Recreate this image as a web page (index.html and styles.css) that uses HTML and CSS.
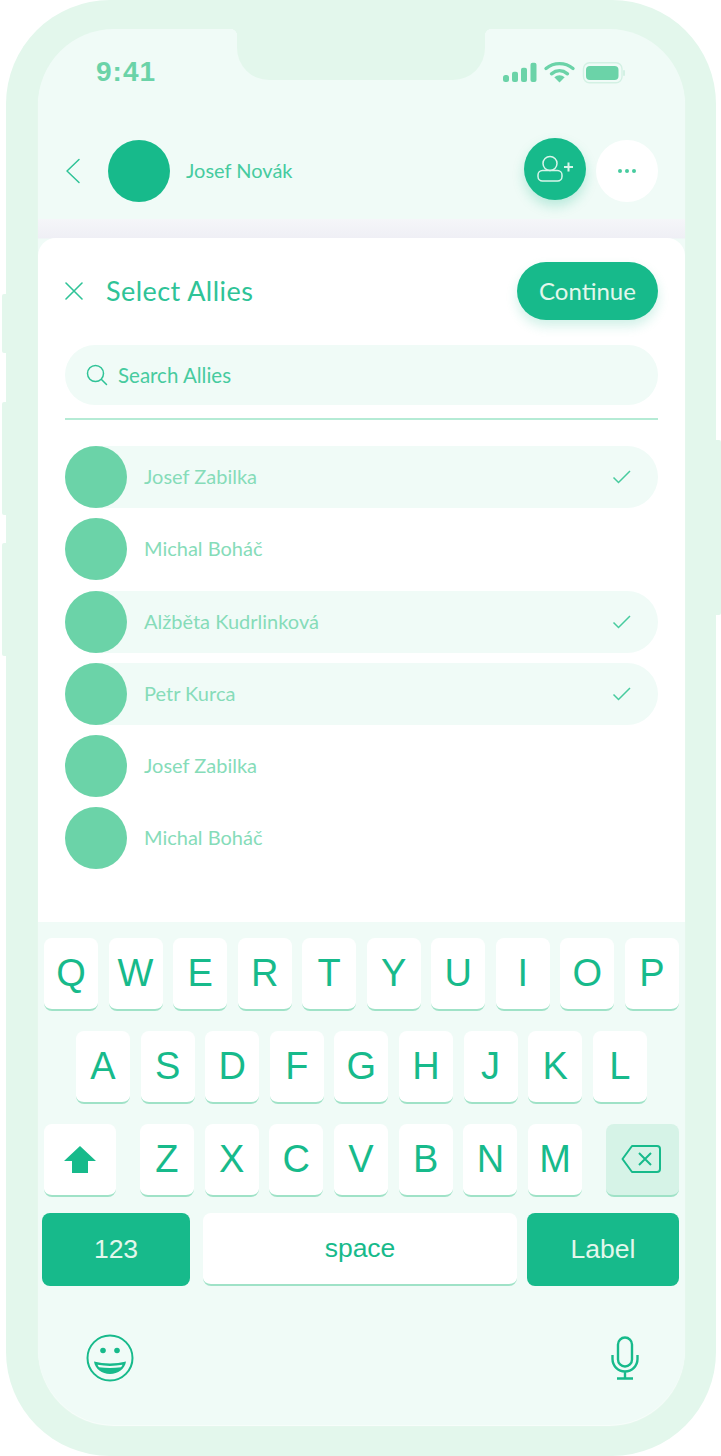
FILE: index.html
```html
<!DOCTYPE html>
<html lang="en">
<head>
  <meta charset="UTF-8">
  <title>Select Allies</title>
  <link rel="stylesheet" href="styles.css">
</head>
<body>

  <div class="phone">
    <span class="side-btn side-mute"></span>
    <span class="side-btn side-up"></span>
    <span class="side-btn side-down"></span>
    <span class="side-btn side-power"></span>

    <div class="screen">
      <div class="notch"></div>

      <div class="status-bar">
        <span class="time">9:41</span>
        <svg class="status-icons" width="122" height="24" viewBox="0 0 122 24">
          <g fill="#6bd3a8">
            <rect x="0" y="15" width="6" height="7" rx="2.500"/>
            <rect x="9" y="11.700" width="6" height="10.300" rx="2"/>
            <rect x="18" y="7.700" width="6" height="14.300" rx="2"/>
            <rect x="27.500" y="2.700" width="6" height="19.300" rx="2"/>
            <path d="M56.500 22.500l-5.200-5.200a7.400 7.400 0 0 1 10.400 0z"/>
            <rect x="83" y="6" width="32.500" height="14" rx="4"/>
          </g>
          <g fill="none" stroke="#6bd3a8" stroke-width="3.400" stroke-linecap="round">
            <path d="M43 8.500c8-6.500 19-6.500 27 0"/>
            <path d="M48.500 13.800c5-4 11-4 16 0"/>
          </g>
          <rect x="80.500" y="2.700" width="38.500" height="20" rx="6" fill="none" stroke="#d3f1e4" stroke-width="1.400"/>
          <rect x="120" y="10" width="2" height="6" rx="1" fill="#d3f1e4"/>
        </svg>
      </div>

      <header class="chat-head">
        <svg class="back-icon" width="16" height="26" viewBox="0 0 16 26">
          <path d="M14 1.500L2 13l12 11.500" fill="none" stroke="#2fc397" stroke-width="1.500" stroke-linecap="round" stroke-linejoin="round"/>
        </svg>
        <span class="avatar avatar-dark"></span>
        <span class="head-name">Josef Novák</span>
        <button class="round-btn add-btn" type="button">
          <svg width="38" height="28" viewBox="0 0 38 28">
            <g fill="none" stroke="#d9f5ea" stroke-width="1.500">
              <circle cx="14" cy="8.500" r="7"/>
              <rect x="2" y="15.500" width="24" height="10.500" rx="4.500"/>
            </g>
            <path d="M28 12h9M32.500 7.500v9" stroke="#d9f5ea" stroke-width="2" fill="none"/>
          </svg>
        </button>
        <button class="round-btn more-btn" type="button">
          <span class="dot"></span><span class="dot"></span><span class="dot"></span>
        </button>
      </header>

      <div class="sheet-wrap">
        <section class="sheet">
          <div class="sheet-top">
            <svg class="close-icon" width="18" height="18" viewBox="0 0 18 18">
              <path d="M1 1l16 16M17 1L1 17" stroke="#2fc397" stroke-width="1.600" stroke-linecap="round" fill="none"/>
            </svg>
            <h2 class="sheet-title">Select Allies</h2>
            <button class="continue-btn" type="button">Continue</button>
          </div>

          <div class="search">
            <svg width="22" height="22" viewBox="0 0 22 22">
              <circle cx="9.500" cy="9.500" r="8" fill="none" stroke="#2fc397" stroke-width="1.500"/>
              <path d="M15.500 15.500l5 5" stroke="#2fc397" stroke-width="1.500" stroke-linecap="round"/>
            </svg>
            <span>Search Allies</span>
          </div>

          <ul class="allies">
            <li class="ally selected">
              <span class="avatar"></span><span class="ally-name">Josef Zabilka</span>
              <svg class="check" width="20" height="16" viewBox="0 0 20 16"><path d="M1.500 8.500l5 5L18 2" fill="none" stroke="#47cb9f" stroke-width="1.500"/></svg>
            </li>
            <li class="ally">
              <span class="avatar"></span><span class="ally-name">Michal Boháč</span>
            </li>
            <li class="ally selected">
              <span class="avatar"></span><span class="ally-name">Alžběta Kudrlinková</span>
              <svg class="check" width="20" height="16" viewBox="0 0 20 16"><path d="M1.500 8.500l5 5L18 2" fill="none" stroke="#47cb9f" stroke-width="1.500"/></svg>
            </li>
            <li class="ally selected">
              <span class="avatar"></span><span class="ally-name">Petr Kurca</span>
              <svg class="check" width="20" height="16" viewBox="0 0 20 16"><path d="M1.500 8.500l5 5L18 2" fill="none" stroke="#47cb9f" stroke-width="1.500"/></svg>
            </li>
            <li class="ally">
              <span class="avatar"></span><span class="ally-name">Josef Zabilka</span>
            </li>
            <li class="ally">
              <span class="avatar"></span><span class="ally-name">Michal Boháč</span>
            </li>
          </ul>
        </section>
      </div>

      <div class="keyboard">
        <div class="key-row">
          <span class="key">Q</span><span class="key">W</span><span class="key">E</span><span class="key">R</span><span class="key">T</span><span class="key">Y</span><span class="key">U</span><span class="key">I</span><span class="key">O</span><span class="key">P</span>
        </div>
        <div class="key-row row-two">
          <span class="key">A</span><span class="key">S</span><span class="key">D</span><span class="key">F</span><span class="key">G</span><span class="key">H</span><span class="key">J</span><span class="key">K</span><span class="key">L</span>
        </div>
        <div class="key-row">
          <span class="key key-shift">
            <svg width="32" height="28" viewBox="0 0 32 28"><path d="M16 1L32 16H24V28H8V16H0z" fill="#17ba8b"/></svg>
          </span>
          <span class="letters">
            <span class="key">Z</span><span class="key">X</span><span class="key">C</span><span class="key">V</span><span class="key">B</span><span class="key">N</span><span class="key">M</span>
          </span>
          <span class="key key-delete">
            <svg width="40" height="30" viewBox="0 0 40 30">
              <path d="M11 2h25a3 3 0 0 1 3 3v20a3 3 0 0 1-3 3H11L1.500 15z" fill="none" stroke="#17ba8b" stroke-width="2" stroke-linejoin="round"/>
              <path d="M18 9l12 12M30 9L18 21" stroke="#17ba8b" stroke-width="2" fill="none"/>
            </svg>
          </span>
        </div>
        <div class="key-row row-bottom">
          <span class="key key-action key-num">123</span>
          <span class="key key-space">space</span>
          <span class="key key-action key-label">Label</span>
        </div>
      </div>

      <div class="kb-tools">
        <svg width="48" height="48" viewBox="0 0 48 48">
          <circle cx="24" cy="24" r="22.500" fill="none" stroke="#17ba8b" stroke-width="2"/>
          <circle cx="17" cy="16.500" r="2.800" fill="#17ba8b"/>
          <circle cx="31" cy="16.500" r="2.800" fill="#17ba8b"/>
          <path d="M8 27.500c10 2.500 22 2.500 32 0c-1 7.500-8 12.500-16 12.500S9 35 8 27.500z" fill="#17ba8b"/>
          <path d="M11.500 30.800c8 1.500 17 1.500 25 0c-.5 1-1 2-1.500 2.500c-7 1-15 1-22 0c-.5-.5-1-1.500-1.500-2.500z" fill="#f0fbf7"/>
        </svg>
        <svg width="28" height="44" viewBox="0 0 28 44">
          <rect x="7" y="1.500" width="14" height="29" rx="7" fill="none" stroke="#17ba8b" stroke-width="2.400"/>
          <path d="M1.500 19v4a12.500 12.500 0 0 0 25 0v-4M14 35.500V42M6 42.500h16" fill="none" stroke="#17ba8b" stroke-width="2.400"/>
        </svg>
      </div>
    </div>
  </div>

</body>
</html>
```

FILE: styles.css
```css
* {
  box-sizing: border-box;
}

body {
  margin: 0;
  width: 721px;
  height: 1456px;
  background-color: white;
  overflow: hidden;
  font-family: "Lato", sans-serif;
}

.phone {
  position: relative;
  margin-left: 6px;
  width: 710px;
  height: 1456px;
  padding: 29px 31px 31px 32px;
  background-color: #e3f7ec;
  border-radius: 104px;
}

.side-btn {
  position: absolute;
  width: 6px;
  background-color: #e3f7ec;
  border-radius: 2px 0 0 2px;
}

.side-mute { left: -4px; top: 294px; height: 59px; }
.side-up { left: -4px; top: 402px; height: 113px; }
.side-down { left: -4px; top: 543px; height: 113px; }

.side-power {
  left: 709px;
  top: 440px;
  height: 175px;
  border-radius: 0 2px 2px 0;
}

.screen {
  position: relative;
  height: 1396px;
  background-color: #f0fbf7;
  border-radius: 76px;
  box-shadow: 0 1px 1px rgba(255, 255, 255, 0.8);
  overflow: hidden;
}

.notch {
  position: absolute;
  top: -1px;
  left: 199px;
  width: 248px;
  height: 52px;
  background-color: #e3f7ec;
  border-radius: 0 0 32px 32px;
}

/* small outward corners where the notch meets the top edge */
.notch::before,
.notch::after {
  content: "";
  position: absolute;
  top: 1px;
  width: 7px;
  height: 7px;
}

.notch::before {
  left: -7px;
  background: radial-gradient(circle at 0 100%, transparent 7px, #e3f7ec 7.500px);
}

.notch::after {
  right: -7px;
  background: radial-gradient(circle at 100% 100%, transparent 7px, #e3f7ec 7.500px);
}

.status-bar {
  display: flex;
  justify-content: space-between;
  align-items: center;
  height: 90px;
  padding: 0 60px 4px 58px;
}

.time {
  font-family: "Liberation Sans", sans-serif;
  font-size: 28px;
  font-weight: bold;
  letter-spacing: 1px;
  color: #6bd3a8;
}

.chat-head {
  display: flex;
  align-items: center;
  height: 100px;
  padding: 4px 27px 0 27px;
}

.back-icon {
  margin-right: 27px;
}

.avatar {
  flex: none;
  display: block;
  width: 62px;
  height: 62px;
  border-radius: 50%;
  background-color: #6bd3a8;
}

.avatar-dark {
  background-color: #17ba8b;
}

.head-name {
  flex: 1;
  margin-left: 16px;
  padding-bottom: 2px;
  font-size: 20px;
  color: #47cb9f;
}

.round-btn {
  display: flex;
  align-items: center;
  justify-content: center;
  width: 62px;
  height: 62px;
  padding: 0;
  border: none;
  border-radius: 50%;
}

.add-btn {
  margin-top: -4px;
  margin-right: 10px;
  background-color: #17ba8b;
  box-shadow: 0 6px 12px rgba(23, 186, 139, 0.25);
}

.more-btn {
  gap: 3px;
  background-color: white;
}

.dot {
  width: 4px;
  height: 4px;
  background-color: #47cb9f;
  border-radius: 50%;
}

.sheet-wrap {
  padding-top: 19px;
  background: linear-gradient(#f5f6f9, #efeff5 19px, #f0fbf7 20px);
}

.sheet {
  height: 684px;
  padding: 24px 27px 0 27px;
  background-color: white;
  border-radius: 18px 18px 0 0;
}

.sheet-top {
  display: flex;
  align-items: center;
  height: 58px;
}

.sheet-title {
  flex: 1;
  margin: 0 0 0 23px;
  padding-bottom: 2px;
  font-size: 27px;
  font-weight: normal;
  letter-spacing: 0.45px;
  color: #2fc397;
}

.continue-btn {
  width: 141px;
  height: 58px;
  padding: 0 0 2px;
  border: none;
  border-radius: 29px;
  background-color: #17ba8b;
  box-shadow: 0 6px 12px rgba(23, 186, 139, 0.2);
  font-family: "Lato", sans-serif;
  font-size: 24px;
  color: #e3f7ec;
}

.search {
  display: flex;
  align-items: center;
  gap: 10px;
  height: 60px;
  margin-top: 25px;
  padding-left: 21px;
  background-color: #f0fbf7;
  border-radius: 30px;
  font-size: 20.500px;
  color: #47cb9f;
}

.allies {
  margin: 13px 0 0;
  padding: 26px 0 0;
  list-style: none;
  border-top: 2px solid #b5ebd5;
}

.ally {
  display: flex;
  align-items: center;
  height: 62px;
  margin-bottom: 10.250px;
  padding-right: 26px;
  border-radius: 31px;
}

.ally.selected {
  background-color: #f0fbf7;
}

.ally-name {
  flex: 1;
  margin-left: 17px;
  padding-bottom: 2px;
  font-size: 20px;
  color: #86dcb9;
}

.keyboard {
  padding: 16px 6px 0;
}

.key-row {
  display: flex;
  justify-content: space-between;
  height: 72px;
  margin-bottom: 21px;
}

.row-two {
  justify-content: flex-start;
  gap: 10.600px;
  padding-left: 32px;
}

.key {
  display: flex;
  align-items: center;
  justify-content: center;
  flex: none;
  width: 54px;
  height: 73px;
  padding-bottom: 1px;
  background-color: white;
  border-radius: 8px;
  border-bottom: 2px solid #9fe2c7;
  font-family: "Liberation Sans", sans-serif;
  font-size: 38px;
  color: #17ba8b;
}

.letters {
  display: flex;
  gap: 10.700px;
}

.key-shift {
  width: 72px;
}

.key-delete {
  width: 73px;
  background-color: #d6f3e7;
}

.key-delete svg {
  margin-right: 3px;
}

.row-bottom {
  justify-content: flex-start;
  margin-top: -4px;
}

.key-action {
  background-color: #17ba8b;
  border-bottom: none;
  font-size: 26.500px;
  color: #e3f7ec;
}

.key-num {
  width: 148px;
  margin-left: -2px;
}

.key-label {
  width: 152px;
}

.key-space {
  width: 314px;
  margin: 0 10px 0 13px;
  font-size: 26.500px;
}

.kb-tools {
  position: absolute;
  left: 48px;
  right: 46px;
  bottom: 43px;
  display: flex;
  justify-content: space-between;
  align-items: center;
}
```
